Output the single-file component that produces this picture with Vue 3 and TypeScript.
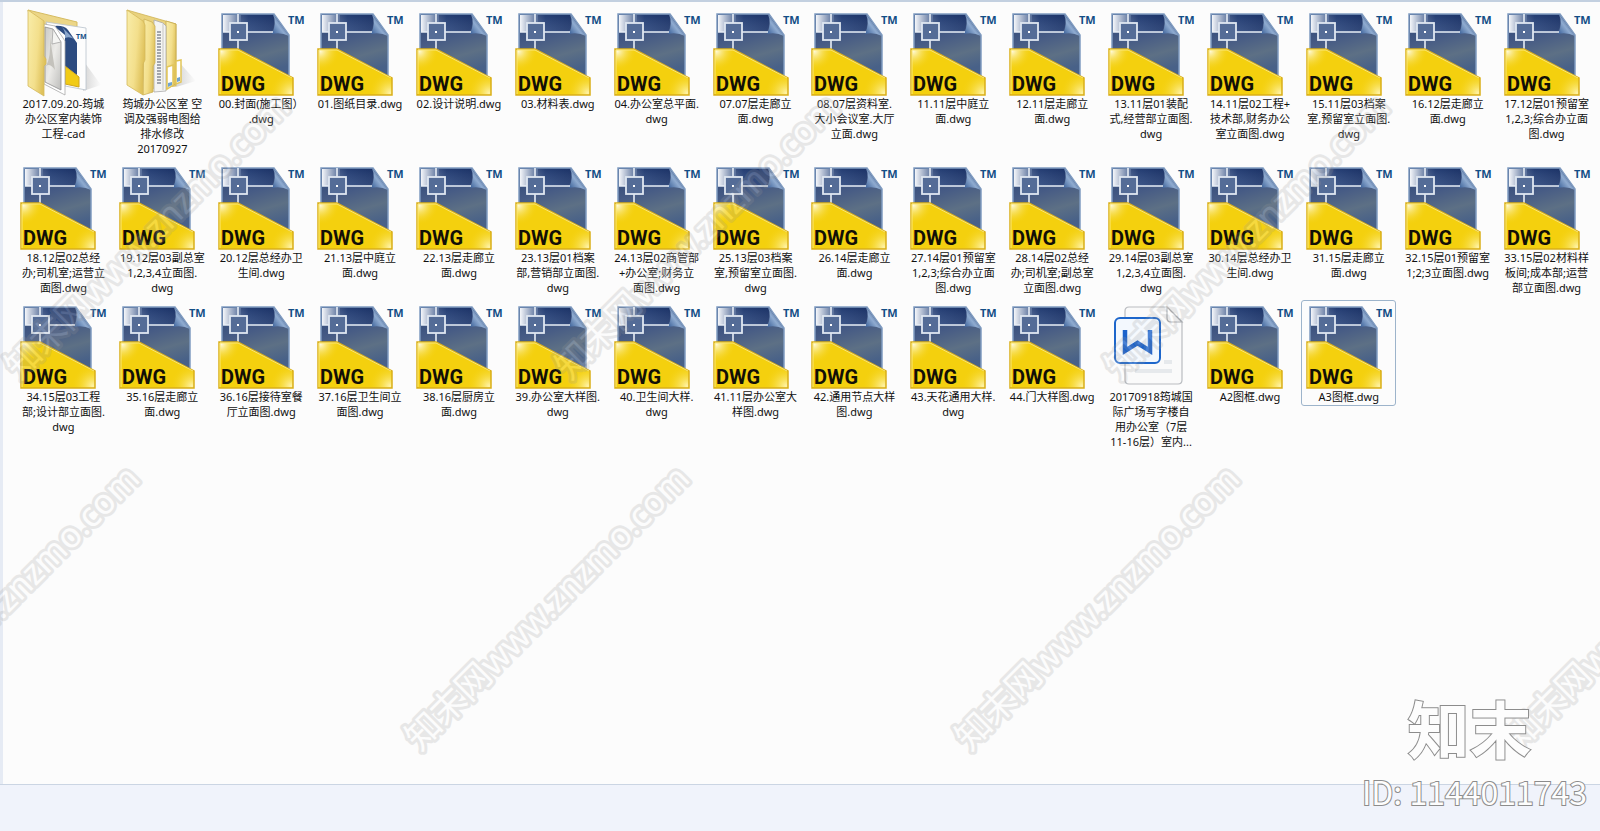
<script setup lang="ts">
type Kind = 'dwg' | 'doc' | 'folder-cad' | 'folder-files'

interface FileItem {
  kind: Kind
  lines: string[]
  selected?: boolean
}

function dwg(label: string, selected = false): FileItem {
  return { kind: 'dwg', lines: label.split('|'), selected }
}

const files: FileItem[] = [
  { kind: 'folder-cad', lines: ['2017.09.20-筠城', '办公区室内装饰', '工程-cad'] },
  { kind: 'folder-files', lines: ['筠城办公区室 空', '调及强弱电图给', '排水修改', '20170927'] },
  dwg('00.封面(施工图）|.dwg'),
  dwg('01.图纸目录.dwg'),
  dwg('02.设计说明.dwg'),
  dwg('03.材料表.dwg'),
  dwg('04.办公室总平面.|dwg'),
  dwg('07.07层走廊立|面.dwg'),
  dwg('08.07层资料室.|大小会议室.大厅|立面.dwg'),
  dwg('11.11层中庭立|面.dwg'),
  dwg('12.11层走廊立|面.dwg'),
  dwg('13.11层01装配|式,经营部立面图.|dwg'),
  dwg('14.11层02工程+|技术部,财务办公|室立面图.dwg'),
  dwg('15.11层03档案|室,预留室立面图.|dwg'),
  dwg('16.12层走廊立|面.dwg'),
  dwg('17.12层01预留室|1,2,3;综合办立面|图.dwg'),
  dwg('18.12层02总经|办;司机室;运营立|面图.dwg'),
  dwg('19.12层03副总室|1,2,3,4立面图.|dwg'),
  dwg('20.12层总经办卫|生间.dwg'),
  dwg('21.13层中庭立|面.dwg'),
  dwg('22.13层走廊立|面.dwg'),
  dwg('23.13层01档案|部,营销部立面图.|dwg'),
  dwg('24.13层02商管部|+办公室;财务立|面图.dwg'),
  dwg('25.13层03档案|室,预留室立面图.|dwg'),
  dwg('26.14层走廊立|面.dwg'),
  dwg('27.14层01预留室|1,2,3;综合办立面|图.dwg'),
  dwg('28.14层02总经|办;司机室;副总室|立面图.dwg'),
  dwg('29.14层03副总室|1,2,3,4立面图.|dwg'),
  dwg('30.14层总经办卫|生间.dwg'),
  dwg('31.15层走廊立|面.dwg'),
  dwg('32.15层01预留室|1;2;3立面图.dwg'),
  dwg('33.15层02材料样|板间;成本部;运营|部立面图.dwg'),
  dwg('34.15层03工程|部;设计部立面图.|dwg'),
  dwg('35.16层走廊立|面.dwg'),
  dwg('36.16层接待室餐|厅立面图.dwg'),
  dwg('37.16层卫生间立|面图.dwg'),
  dwg('38.16层厨房立|面.dwg'),
  dwg('39.办公室大样图.|dwg'),
  dwg('40.卫生间大样.|dwg'),
  dwg('41.11层办公室大|样图.dwg'),
  dwg('42.通用节点大样|图.dwg'),
  dwg('43.天花通用大样.|dwg'),
  dwg('44.门大样图.dwg'),
  { kind: 'doc', lines: ['20170918筠城国', '际广场写字楼自', '用办公室（7层', '11-16层）室内...'] },
  dwg('A2图框.dwg'),
  dwg('A3图框.dwg', true),
]

const watermarks = [
  { x: 20, y: 379 },
  { x: 570, y: 379 },
  { x: 1120, y: 379 },
  { x: -130, y: 750 },
  { x: 420, y: 750 },
  { x: 970, y: 750 },
  { x: 1520, y: 750 },
]
</script>

<template>
  <div class="window">
    <svg class="defs" width="0" height="0" aria-hidden="true">
      <defs>
        <linearGradient id="page" x1="0" y1="0" x2="0.3" y2="1">
          <stop offset="0" stop-color="#2b4474" />
          <stop offset="0.45" stop-color="#465b85" />
          <stop offset="0.75" stop-color="#5d7085" />
          <stop offset="1" stop-color="#486188" />
        </linearGradient>
        <linearGradient id="roll" x1="0" y1="0" x2="1" y2="0">
          <stop offset="0" stop-color="#f4f6fa" />
          <stop offset="0.28" stop-color="#6f83a8" />
          <stop offset="0.5" stop-color="#2f4a80" />
          <stop offset="1" stop-color="#1d3468" />
        </linearGradient>
        <linearGradient id="shade" x1="0" y1="0" x2="0" y2="1">
          <stop offset="0" stop-color="#1a3166" stop-opacity="0.5" />
          <stop offset="1" stop-color="#5b7099" stop-opacity="0.3" />
        </linearGradient>
        <linearGradient id="curl" x1="0" y1="1" x2="0.7" y2="0.3">
          <stop offset="0" stop-color="#2f5691" />
          <stop offset="0.6" stop-color="#8fabd0" />
          <stop offset="1" stop-color="#4a6796" />
        </linearGradient>
        <radialGradient id="glowA" gradientUnits="userSpaceOnUse" cx="6" cy="38" r="20">
          <stop offset="0" stop-color="#fffbe0" />
          <stop offset="1" stop-color="#f3d00f" stop-opacity="0" />
        </radialGradient>
        <radialGradient id="glowB" gradientUnits="userSpaceOnUse" cx="76" cy="80" r="22">
          <stop offset="0" stop-color="#fff3a8" />
          <stop offset="1" stop-color="#f3d00f" stop-opacity="0" />
        </radialGradient>
        <linearGradient id="flap" x1="0" y1="0" x2="1" y2="0.4">
          <stop offset="0" stop-color="#f9eda9" />
          <stop offset="0.6" stop-color="#f3df8c" />
          <stop offset="1" stop-color="#dfc25c" />
        </linearGradient>
        <linearGradient id="paper" x1="0" y1="0" x2="1" y2="1">
          <stop offset="0" stop-color="#c9c9c6" />
          <stop offset="0.5" stop-color="#ecebe8" />
          <stop offset="1" stop-color="#bdbdbb" />
        </linearGradient>
        <linearGradient id="fade" x1="0" y1="0" x2="1" y2="0">
          <stop offset="0" stop-color="#8c8c8c" stop-opacity="0.35" />
          <stop offset="1" stop-color="#8c8c8c" stop-opacity="0" />
        </linearGradient>
      </defs>
    </svg>

    <main class="pane">
      <ul class="grid">
        <li v-for="file in files" :key="file.lines.join('')">
          <button type="button" class="file" :class="{ selected: file.selected }">
            <svg v-if="file.kind === 'dwg'" class="icon" viewBox="0 0 92 84">
              <path d="M7 1H59L74 22V66H7Z" fill="url(#page)" stroke="#7f9bc0" stroke-width="1.5" />
              <path d="M8 2H58Q61 10 57 19H8Z" fill="url(#roll)" />
              <path d="M26 2H58Q61 10 57 19H26Z" fill="url(#shade)" />
              <path d="M58 1Q62 10 57 21Q66 19 74 23Z" fill="url(#curl)" />
              <path d="M8 19H58M23 1V10M23 27V36" stroke="#e8eef6" stroke-width="1.6" fill="none" />
              <rect x="15" y="10" width="17" height="17" fill="#546c97" stroke="#dfe7f1" stroke-width="1.8" />
              <rect x="22" y="18" width="2" height="2" fill="#fff" />
              <path d="M4 36H23L74 63L78 65V82H4Z" fill="#f4d00e" />
              <path d="M4 36H23L74 63L78 65V82H4Z" fill="url(#glowA)" />
              <path d="M4 36H23L74 63L78 65V82H4Z" fill="url(#glowB)" stroke="#d9ae18" stroke-width="1.5" />
              <path d="M5 81V37H23L77 65" fill="none" stroke="#fbe876" stroke-width="1" />
              <text x="6" y="78" class="type">DWG</text>
              <text x="73" y="11" class="mark">TM</text>
            </svg>

            <svg v-else-if="file.kind === 'doc'" class="icon" viewBox="0 0 92 84">
              <path
                d="M24 1H62L77 16V74Q77 78 73 78H24Q20 78 20 74V5Q20 1 24 1Z"
                fill="#fafafa" stroke="#b9bcc0" stroke-width="1.2"
              />
              <path d="M62 1V12Q62 16 66 16H77Z" fill="#fdfdfd" stroke="#a9acb0" stroke-width="1.2" />
              <path d="M59 56H67M30 65H67" stroke="#e6e9ec" stroke-width="4" />
              <rect x="10" y="12" width="45" height="45" rx="5" fill="#f3f8fe" stroke="#1d66cb" stroke-width="2" />
              <path d="M20 24V45L32.500 37L45 45V24" fill="none" stroke="#1b62cb" stroke-width="4.500" />
            </svg>

            <svg v-else-if="file.kind === 'folder-cad'" class="icon" viewBox="0 0 92 84">
              <path d="M68 50L84 72L66 78Z" fill="url(#fade)" />
              <path d="M11 -3L60 9V66L27 70Z" fill="#ecd687" stroke="#d6bc62" />
              <path d="M29 9L69 15V77L48 73Z" fill="#fdfdfd" stroke="#b8c2cc" stroke-width="0.800" />
              <path d="M37 13Q47 12 51 17L60 30V62L48 54V22Z" fill="#2c4b80" />
              <path d="M45 14Q49 19 48 25Q54 23 58 27Z" fill="#8aa6cc" />
              <path d="M48 53L62 64V74L48 71Z" fill="#f1cb16" stroke="#d0a51c" />
              <text x="59" y="26" class="mark small">TM</text>
              <path d="M27 11L38 13L48 28V82L27 71Z" fill="#fff" stroke="#a9a9a9" stroke-width="0.800" />
              <path d="M28 14L36 16L44 29V77L28 69Z" fill="url(#paper)" stroke="#8e8e8e" stroke-width="0.800" />
              <path d="M36 16L35 31L44 29Z" fill="#f5f5f3" stroke="#a5a5a5" stroke-width="0.800" />
              <path d="M29 53Q34 45 33 25L38 57Q33 50 29 53Z" fill="#c4c2bc" />
              <path d="M11 -3L27 8V43L29 46V51L27 53V83L11 73Z" fill="url(#flap)" stroke="#d4b95b" stroke-width="0.800" />
            </svg>

            <svg v-else class="icon" viewBox="0 0 92 84">
              <path d="M62 48L80 68L60 74Z" fill="url(#fade)" />
              <path d="M11 -3L60 11V73L30 76Z" fill="#e9d27e" stroke="#cfb254" stroke-width="0.800" />
              <path d="M50 8L60 11V71L50 76Z" fill="url(#flap)" stroke="#c5a94f" stroke-width="0.800" />
              <path d="M38 7L47 10L50 13V78L38 79Z" fill="#f4f4f2" stroke="#a9a9a9" stroke-width="0.800" />
              <path d="M43 18V72" stroke="#a2a6ad" stroke-width="4" stroke-dasharray="2 1" />
              <path d="M47 11V77" stroke="#c6c6c4" />
              <path d="M51 54L57 52V72L51 76Z" fill="#fff" stroke="#e2c65a" stroke-width="1.500" />
              <path d="M60 48L65 47V69L60 71Z" fill="#fff" stroke="#e2c65a" stroke-width="1.500" />
              <path d="M52 70L56 69V72L52 74ZM61 65L64 64V68L61 69Z" fill="#6fa3cf" />
              <path d="M28 6L36 9L39 13V50L37 53V79L27 82Z" fill="url(#flap)" stroke="#cdb157" stroke-width="0.800" />
              <path d="M11 -3L27 8L29 12V47L27 51V82L11 72Z" fill="url(#flap)" stroke="#d4b95b" stroke-width="0.800" />
            </svg>

            <span class="label">
              <span v-for="line in file.lines" :key="line" class="line">{{ line }}</span>
            </span>
          </button>
        </li>
      </ul>
    </main>
    <footer class="details"></footer>

    <svg class="overlay" aria-hidden="true">
      <g v-for="(w, i) in watermarks" :key="i" :transform="`translate(${w.x} ${w.y}) rotate(-45)`">
        <text class="watermark">知末网www.znzmo.com</text>
      </g>
    </svg>
    <div class="stamp">
      <span class="brand">知末</span>
      <span class="id">ID: 1144011743</span>
    </div>
  </div>
</template>

<style>
body {
  margin: 0;
  background: #fcfcfc;
}
</style>

<style scoped>
.window {
  position: relative;
  box-sizing: border-box;
  min-height: 100vh;
  display: flex;
  flex-direction: column;
  overflow: hidden;
  border-top: 2px solid #c3d0e0;
  background: #fcfcfc;
  font-family: "Noto Sans", "Noto Sans CJK SC", sans-serif;
}

.defs {
  position: absolute;
}

.pane {
  flex: 1;
  border-left: 3px solid #e6ebf4;
}

.grid {
  display: grid;
  grid-template-columns: repeat(16, minmax(0, 1fr));
  gap: 3px 4px;
  margin: 0;
  padding: 5px 6px 0 13px;
  list-style: none;
}

.file {
  display: flex;
  flex-direction: column;
  align-items: center;
  box-sizing: border-box;
  width: 100%;
  margin: 0;
  padding: 5px 0 1px;
  border: 1px solid transparent;
  border-radius: 3px;
  background: none;
  color: #101010;
  font: inherit;
}

.file.selected {
  border-color: #9db4cb;
}

.icon {
  display: block;
  width: 92px;
  height: 84px;
  margin-bottom: -1px;
  overflow: visible;
}

.type {
  font: bold 20px Roboto, "Liberation Sans", sans-serif;
  fill: #120f06;
}

.mark {
  font: bold 11px "Open Sans", "Noto Sans", sans-serif;
  fill: #134e86;
}

.mark.small {
  font-size: 7px;
}

.label {
  display: block;
  font-size: 11px;
  line-height: 15px;
  text-align: center;
  white-space: nowrap;
}

.line {
  display: block;
  height: 15px;
}

.details {
  height: 46px;
  border-top: 1px solid #cbd5e3;
  background: #f0f3fb;
}

.overlay {
  position: absolute;
  inset: 0;
  width: 100%;
  height: 100%;
  pointer-events: none;
}

.watermark {
  font-size: 35px;
  fill: #fff;
  stroke: #989898;
  stroke-width: 6px;
  stroke-linejoin: round;
  paint-order: stroke;
  opacity: 0.2;
}

.stamp {
  position: absolute;
  right: 13px;
  bottom: 20px;
  display: flex;
  flex-direction: column;
  align-items: center;
  color: #fdfdfd;
  font-family: "Noto Sans CJK SC", sans-serif;
  paint-order: stroke fill;
  -webkit-text-stroke: 2px #8c8c8c;
  pointer-events: none;
}

.brand {
  margin-bottom: 8px;
  padding-right: 10px;
  font-size: 62px;
  font-weight: 700;
  line-height: 72px;
}

.id {
  font-size: 32px;
  line-height: 40px;
}
</style>
